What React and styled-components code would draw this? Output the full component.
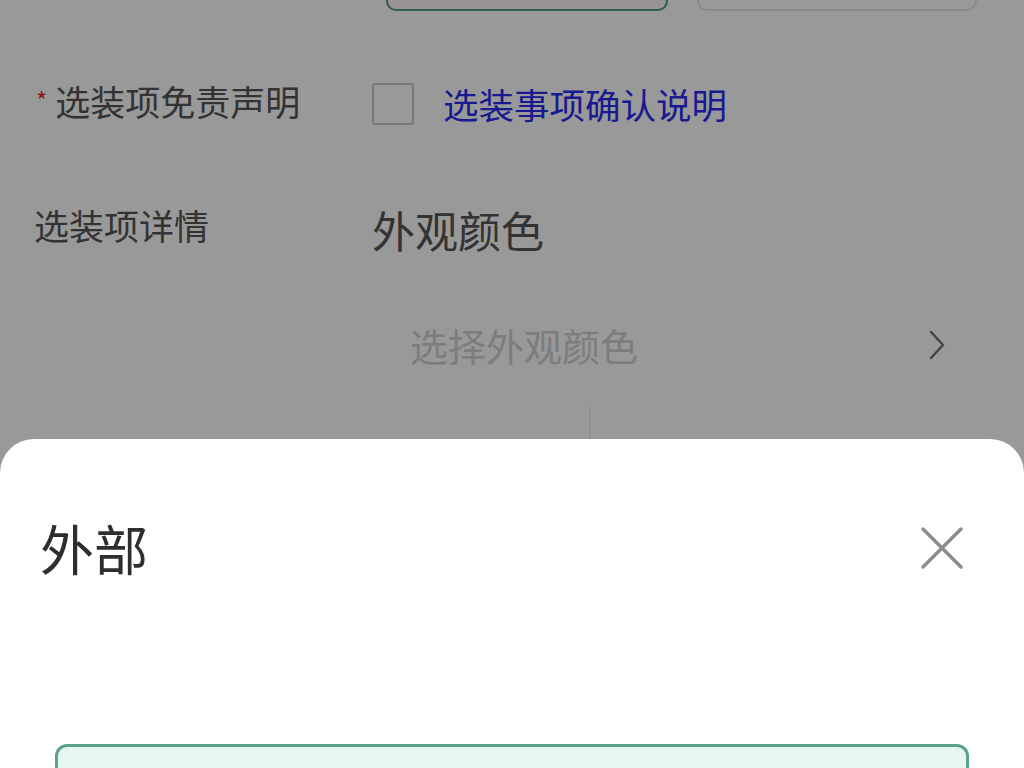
import React from 'react';
import styled, { createGlobalStyle } from 'styled-components';

const GlobalStyle = createGlobalStyle`
  html, body {
    margin: 0;
    padding: 0;
    background: #ffffff;
    font-family: "Noto Sans CJK SC", "Noto Sans", sans-serif;
  }
  * { box-sizing: border-box; }
`;

const Screen = styled.div`
  position: relative;
  width: 1024px;
  height: 768px;
  overflow: hidden;
  background: #ffffff;
`;

const Page = styled.div`
  padding: 0 34px;
`;

const ButtonRow = styled.div`
  display: flex;
  gap: 29px;
  margin-top: -30px;
  padding-left: 352px;
`;

const OptionButton = styled.div`
  width: ${(p) => p.w}px;
  height: 41px;
  border-radius: 10px;
  border: 2px solid ${(p) => (p.active ? '#4f9f84' : '#e6e6e6')};
  background: ${(p) => (p.active ? '#fff6f8' : '#ffffff')};
`;

const FormRow = styled.div`
  display: flex;
  align-items: center;
  height: 80px;
  margin-top: ${(p) => p.mt}px;
`;

const Label = styled.div`
  width: 338px;
  flex-shrink: 0;
  font-size: 35px;
  line-height: 1;
  color: #555555;
  margin-top: ${(p) => p.shift || 0}px;
  padding-left: ${(p) => p.indent || 0}px;
`;

const Star = styled.span`
  color: #e52a2a;
  font-size: 24px;
  vertical-align: 6px;
  margin-right: 8px;
`;

const Checkbox = styled.span`
  width: 42px;
  height: 42px;
  border: 2px solid #cbcbcb;
  border-radius: 3px;
  background: #ffffff;
  flex-shrink: 0;
`;

const LinkText = styled.a`
  margin-left: 29px;
  font-size: 35.5px;
  line-height: 1;
  color: #2b2bf0;
  text-decoration: none;
`;

const ValueText = styled.div`
  font-size: 43px;
  line-height: 1;
  color: #555555;
  margin-top: 6px;
`;

const Picker = styled.div`
  display: flex;
  align-items: center;
  justify-content: space-between;
  flex: 1;
  padding-left: 376px;
  padding-right: 44px;
`;

const Placeholder = styled.span`
  font-size: 38px;
  line-height: 1;
  color: #d0d0d0;
`;

const DividerRow = styled.div`
  margin-top: 20px;
  padding-left: 555px;
`;

const Divider = styled.div`
  width: 2px;
  height: 40px;
  background: #f2f2f2;
`;

const Mask = styled.div`
  position: absolute;
  inset: 0;
  background: rgba(0, 0, 0, 0.4);
`;

const Sheet = styled.div`
  position: absolute;
  left: 0;
  right: 0;
  top: 439px;
  bottom: 0;
  background: #ffffff;
  border-radius: 34px 34px 0 0;
`;

const SheetHeader = styled.div`
  display: flex;
  align-items: center;
  justify-content: space-between;
  height: 68px;
  margin-top: 75px;
  padding: 0 60px 0 40px;
`;

const SheetTitle = styled.h2`
  margin: 0;
  font-size: 54px;
  font-weight: 400;
  line-height: 1;
  color: #2e2e2e;
`;

const CloseButton = styled.button`
  width: 44px;
  height: 44px;
  padding: 0;
  border: none;
  background: none;
  display: flex;
  align-items: center;
  justify-content: center;
`;

const ColorCard = styled.div`
  margin: 162px 55px 0 55px;
  height: 120px;
  border: 3px solid #5aa386;
  border-radius: 12px;
  background: #e6f7f1;
`;

export default function App() {
  return (
    <Screen>
      <GlobalStyle />
      <Page>
        <ButtonRow>
          <OptionButton w={282} active />
          <OptionButton w={280} />
        </ButtonRow>

        <FormRow mt={53}>
          <Label indent={2} shift={-8}>
            <Star>*</Star>选装项免责声明
          </Label>
          <Checkbox />
          <LinkText href="#">选装事项确认说明</LinkText>
        </FormRow>

        <FormRow mt={42}>
          <Label shift={-4}>选装项详情</Label>
          <ValueText>外观颜色</ValueText>
        </FormRow>

        <FormRow mt={39}>
          <Picker>
            <Placeholder>选择外观颜色</Placeholder>
            <svg width="18" height="30" viewBox="0 0 18 30" fill="none">
              <path d="M3 2 L15 15 L3 28" stroke="#6e6e6e" strokeWidth="2.4" strokeLinecap="round" strokeLinejoin="round" />
            </svg>
          </Picker>
        </FormRow>

        <DividerRow>
          <Divider />
        </DividerRow>
      </Page>

      <Mask />

      <Sheet>
        <SheetHeader>
          <SheetTitle>外部</SheetTitle>
          <CloseButton aria-label="关闭">
            <svg width="42" height="42" viewBox="0 0 42 42" fill="none">
              <path d="M2 2 L40 40 M40 2 L2 40" stroke="#8c8c8c" strokeWidth="3.4" strokeLinecap="round" />
            </svg>
          </CloseButton>
        </SheetHeader>
        <ColorCard />
      </Sheet>
    </Screen>
  );
}
